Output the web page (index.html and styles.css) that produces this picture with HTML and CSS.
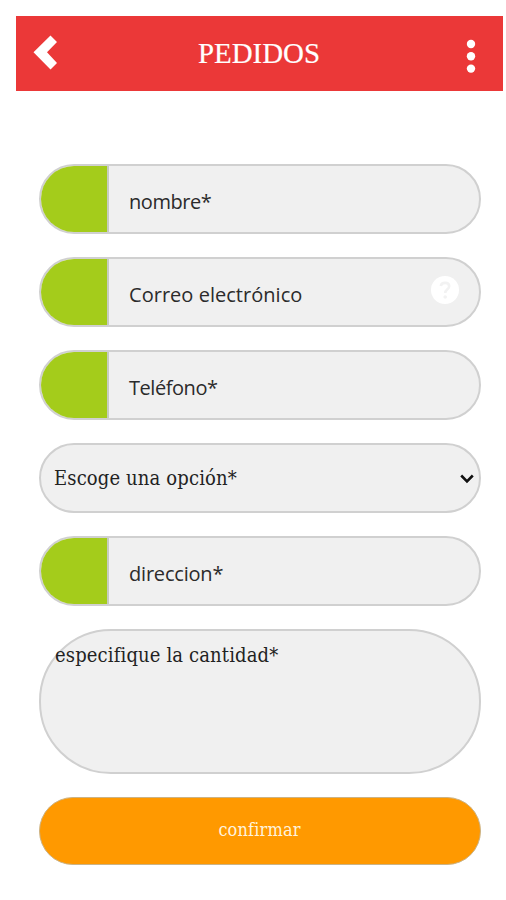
FILE: index.html
```
<!DOCTYPE html>
<html lang="es">
<head>
<meta charset="utf-8">
<title>Pedidos</title>
<link rel="stylesheet" href="styles.css">
</head>
<body>
<header class="bar">
  <svg class="back" viewBox="0 0 24 35" width="24" height="35"><path d="M17.5 0.5L24 7L14 17.2L24 28L17.5 34.5L0.5 17.2Z" fill="#fff"/></svg>
  <h1 class="title">PEDIDOS</h1>
  <svg class="more" viewBox="0 0 10 34" width="10" height="34" fill="#fff"><circle cx="5" cy="5" r="4.2"/><circle cx="5" cy="17.3" r="4.2"/><circle cx="5" cy="29.6" r="4.2"/></svg>
</header>
<main class="form">
  <div class="field"><span class="tab"></span><span class="label nombre">nombre*</span></div>
  <div class="field"><span class="tab"></span><span class="label correo">Correo electrónico</span>
    <svg class="help" viewBox="0 0 28 28" width="28" height="28"><circle cx="14" cy="14" r="14" fill="#fff"/><path d="M9.8 10C10.5 5.8 18.2 5.8 18.2 10.2C18.2 13.2 14.2 13.2 14.2 17" fill="none" stroke="#f2f2f2" stroke-width="2.6"/><circle cx="14.2" cy="21" r="1.8" fill="#f2f2f2"/></svg>
  </div>
  <div class="field"><span class="tab"></span><span class="label telefono">Teléfono*</span></div>
  <div class="field select"><span class="serif opcion">Escoge una opción*</span>
    <svg class="chevron" viewBox="0 0 14 10" width="14" height="10"><path d="M1.2 1.5L7 7.3L12.8 1.5" fill="none" stroke="#111" stroke-width="2.6"/></svg>
  </div>
  <div class="field"><span class="tab"></span><span class="label direccion">direccion*</span></div>
  <div class="area"><span class="serif cantidad">especifique la cantidad*</span></div>
  <div class="submit"><span class="serif confirmar">confirmar</span></div>
</main>
</body>
</html>
```
FILE: styles.css
```
* { box-sizing: border-box; }
body { margin: 0; padding: 16px 0 0; background: #fff; height: 900px; overflow: hidden; }
.bar { display: flex; align-items: center; width: 487px; height: 75px; margin-left: 16px; padding: 0 27px 0 17px; background: #eb3838; }
.back { margin-top: -2px; }
.title { margin: -2px 0 0 141px; font: 400 28.9px/34px "Liberation Serif", serif; color: #fff; white-space: nowrap; -webkit-text-stroke: 0.2px #fff; }
.more { margin: 5px 0 0 auto; }
.form { display: flex; flex-direction: column; gap: 23px; width: 442px; margin: 73px 0 0 39px; }
.field, .area, .submit { border: 2px solid #d0d0d0; background: #f0f0f0; display: flex; }
.field { height: 70px; border-radius: 35px; align-items: center; overflow: hidden; }
.tab { width: 68px; height: 66px; background: #a4cc1b; border-right: 2px solid #c6cbc0; flex: none; }
.label { margin: 5px 0 0 20px; font: 400 20px/28px "Open Sans", "Noto Sans", sans-serif; color: #2b2b2b; white-space: nowrap; letter-spacing: -0.2px; }
.nombre { letter-spacing: -0.45px; }
.correo { letter-spacing: 0.03px; }
.telefono { letter-spacing: -0.45px; }
.help { margin: -5px 20px 0 auto; }
.select { padding: 0 5px 0 13px; }
.chevron { margin-left: auto; margin-top: 1px; }
.serif { font-family: "DejaVu Serif Condensed", "DejaVu Serif", serif; font-stretch: condensed; font-size: 20px; line-height: 28px; color: #222; white-space: nowrap; letter-spacing: 0.14px; }
.area { height: 145px; border-radius: 72px; padding: 10px 0 0 14px; }
.submit { height: 68px; border-radius: 34px; border: 1px solid #cbb386; background: #ff9900; align-items: center; justify-content: center; }
.submit .serif { color: #fff3dc; font-size: 18px; margin: -2px 1px 0 0; }
```
